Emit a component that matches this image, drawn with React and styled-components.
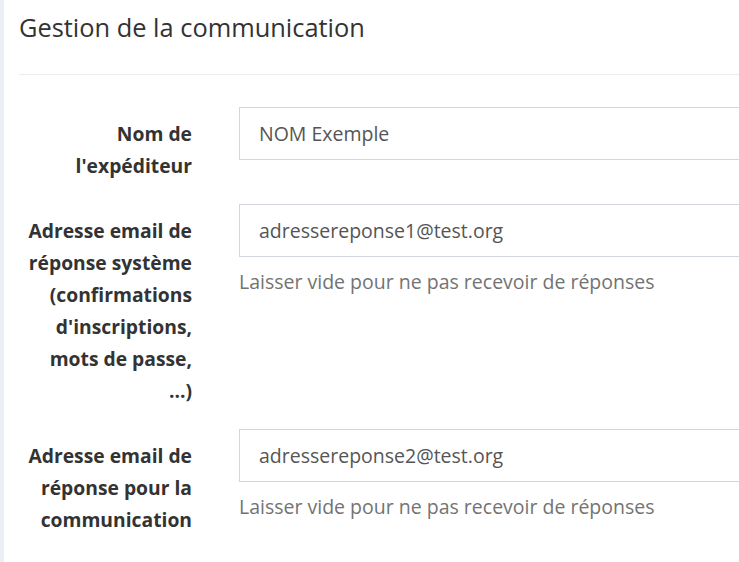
import React from "react";
import styled, { createGlobalStyle } from "styled-components";

const GlobalStyle = createGlobalStyle`
  html, body {
    margin: 0;
    padding: 0;
    background: #ffffff;
    overflow: hidden;
  }
  * { box-sizing: border-box; }
`;

const Page = styled.div`
  width: 100vw;
  height: 100vh;
  overflow: hidden;
  background: #ecf0f5;
  padding-left: 4px;
  font-family: "Open Sans", "Liberation Sans", sans-serif;
`;

const Box = styled.section`
  background: #ffffff;
  width: 1100px;
  min-height: 100%;
`;

const Header = styled.div`
  margin-left: 15px;
  height: 75px;
  padding-top: 11px;
  border-bottom: 1px solid #ececec;
`;

const Title = styled.h3`
  margin: 0;
  font-size: 25.4px;
  font-weight: 400;
  line-height: 32px;
  color: #333333;
`;

const Form = styled.form`
  padding-top: 32px;
`;

const Row = styled.div`
  display: flex;
  align-items: flex-start;
  margin-bottom: 22px;
`;

const Label = styled.label`
  flex: 0 0 188px;
  padding: 11px 0 0 22px;
  text-align: right;
  font-size: 19.3px;
  font-weight: 700;
  line-height: 32px;
  color: #333333;
`;

const Field = styled.div`
  flex: 1;
  margin-left: 47px;
`;

const Input = styled.input`
  display: block;
  width: 100%;
  height: 53px;
  padding: 0 19px;
  border: 1px solid #d2d6de;
  border-radius: 0;
  background: #ffffff;
  font-family: inherit;
  font-size: 19.5px;
  color: #555555;
  outline: none;
`;

const Help = styled.p`
  margin: 9px 0 0;
  font-size: 19.5px;
  line-height: 32px;
  color: #737373;
`;

const fields = [
  { label: "Nom de l'expéditeur", value: "NOM Exemple" },
  {
    label: "Adresse email de réponse système (confirmations d'inscriptions, mots de passe, ...)",
    value: "adressereponse1@test.org",
    help: "Laisser vide pour ne pas recevoir de réponses",
  },
  {
    label: "Adresse email de réponse pour la communication",
    value: "adressereponse2@test.org",
    help: "Laisser vide pour ne pas recevoir de réponses",
  },
];

export default function App() {
  return (
    <>
      <GlobalStyle />
      <Page>
        <Box>
          <Header>
            <Title>Gestion de la communication</Title>
          </Header>
          <Form>
            {fields.map((f) => (
              <Row key={f.value}>
                <Label>{f.label}</Label>
                <Field>
                  <Input type="text" defaultValue={f.value} />
                  {f.help && <Help>{f.help}</Help>}
                </Field>
              </Row>
            ))}
          </Form>
        </Box>
      </Page>
    </>
  );
}
